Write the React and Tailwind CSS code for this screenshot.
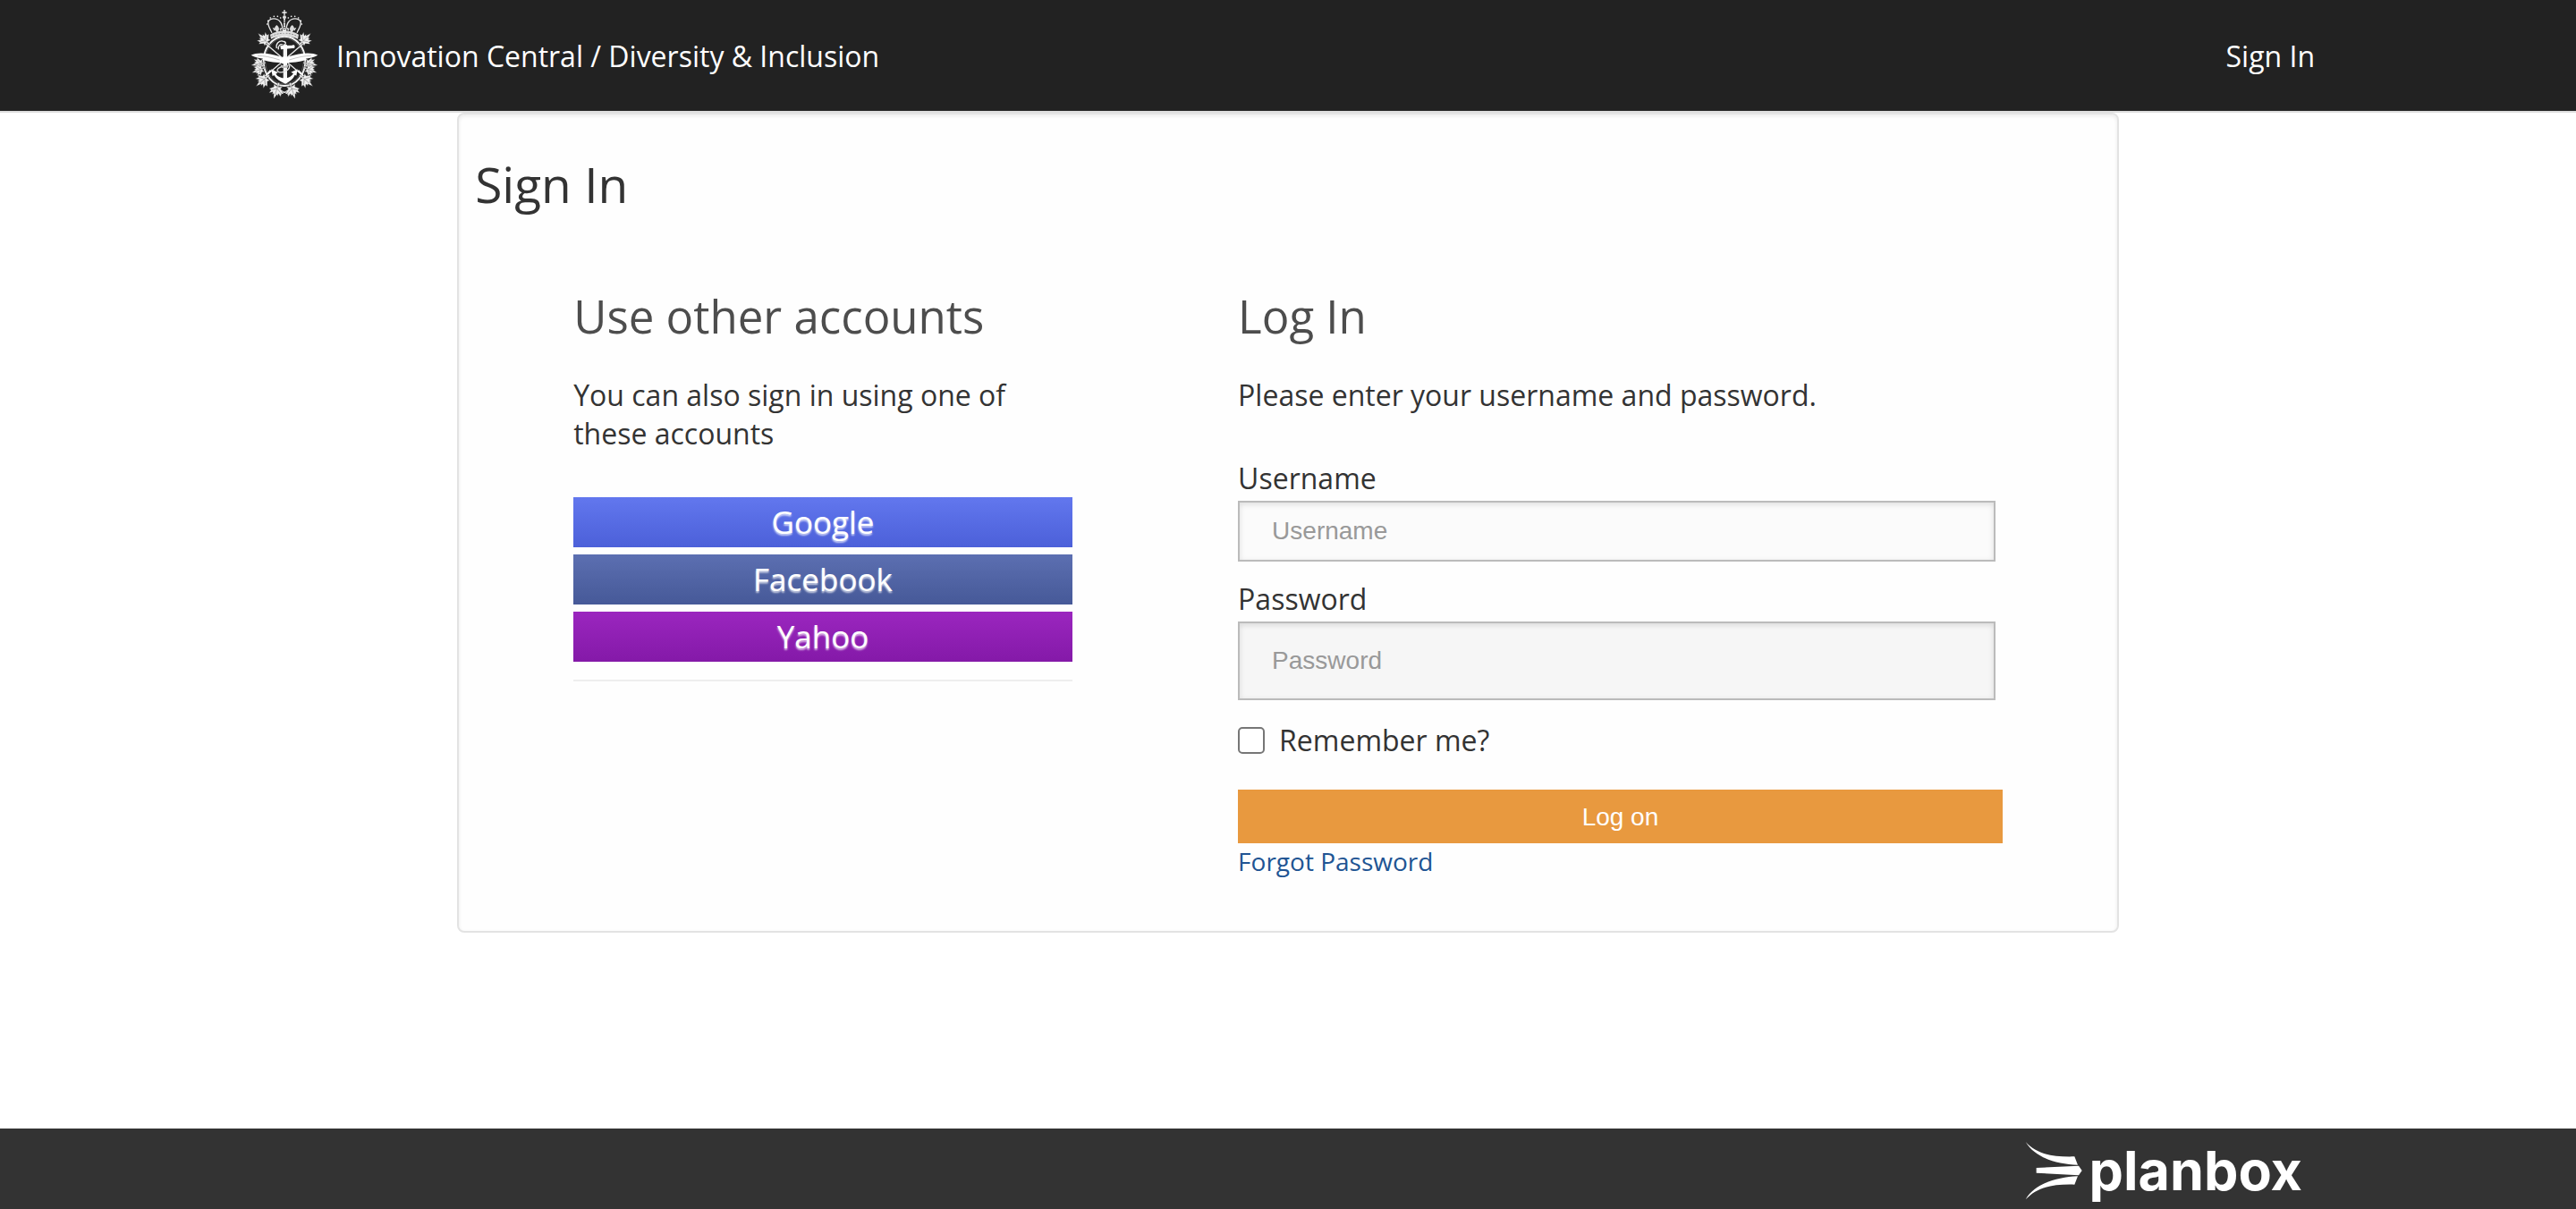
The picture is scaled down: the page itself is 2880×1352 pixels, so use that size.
const LEAF =
  "M-3 22 L-3 10 L-14 14 L-11 6 L-23 -4 L-16 -6 L-19 -17 L-9 -10 L-9 -18 L-5 -14 L0 -30 L5 -14 L9 -18 L9 -10 L19 -17 L16 -6 L23 -4 L11 6 L14 14 L3 10 L3 22 Z";

const LEAVES = [
  "translate(108 134) rotate(-45) scale(1.05)",
  "translate(90 214) rotate(-100) scale(0.95)",
  "translate(90 234) rotate(-112) scale(0.9)",
  "translate(104 268) rotate(-130) scale(1.1)",
  "translate(148 301) rotate(-162) scale(1.1)",
];

function CrestHalf() {
  return (
    <g>
      {LEAVES.map((t) => (
        <g key={t} transform={t}>
          <path d={LEAF} fill="#f0f0f0" stroke="#222" strokeWidth="1" />
          <path d="M0 14V-16M0 4L-14 -5M0 4L14 -5" stroke="#777" strokeWidth="1.5" fill="none" />
        </g>
      ))}
      <path d="M172 112C166 90 166 72 152 66C134 58 116 66 120 82C122 94 128 100 132 110" fill="none" stroke="#e6e6e6" strokeWidth="4" />
      <path d="M150 110C140 100 138 92 148 84C158 92 158 100 150 110Z M134 92l10 4-4 8z M166 92l-9 4 5 9z" fill="#dcdcdc" />
      <g fill="#fff">
        <circle cx="119" cy="70" r="2.5" />
        <circle cx="127" cy="60" r="2.5" />
        <circle cx="139" cy="55" r="2.5" />
        <circle cx="151" cy="55" r="2.5" />
        <circle cx="161" cy="60" r="2.5" />
        <circle cx="116" cy="81" r="2.5" />
      </g>
      <path d="M62 185C84 174 122 178 160 190L170 198L164 210C140 210 112 206 96 198L108 197C90 196 74 192 62 185Z" fill="#fff" />
      <path d="M84 187C106 187 130 192 158 201" stroke="#888" strokeWidth="1.5" fill="none" />
    </g>
  );
}

function Crest() {
  return (
    <svg viewBox="60 30 228 300" className="mb-1 h-[100px] w-[76px] shrink-0" aria-hidden="true">
      <ellipse cx="174" cy="205" rx="70" ry="83" fill="#222" stroke="#f2f2f2" strokeWidth="6" />
      <ellipse cx="174" cy="205" rx="64" ry="77" fill="none" stroke="#8a8a8a" strokeWidth="1.5" />
      <path d="M104 140L238 256M244 140L110 256" stroke="#e8e8e8" strokeWidth="4" />
      <path d="M128 236l-18 20M220 236l18 20" stroke="#fff" strokeWidth="6" />
      <path d="M126 116C152 98 196 98 222 116L219 131C194 117 154 117 129 131Z" fill="#dedede" />
      <path d="M130 122C156 108 192 108 218 122" stroke="#666" strokeWidth="2" strokeDasharray="6 4" fill="none" />
      <path d="M174 64V108" stroke="#eee" strokeWidth="6" strokeDasharray="5 2" />
      <circle cx="174" cy="58" r="6" fill="#ddd" />
      <path d="M174 33V52M166 42H182" stroke="#eee" strokeWidth="4" />
      <CrestHalf />
      <g transform="translate(348 0) scale(-1 1)">
        <CrestHalf />
      </g>
      <path d="M170 150H183V270H170Z" fill="#f4f4f4" />
      <path d="M160 153L206 152L208 161L162 166Z" fill="#fff" />
      <circle cx="204" cy="156" r="5" fill="#fff" />
      <path d="M148 162C144 146 156 136 168 138C182 140 180 152 170 150M154 166C152 154 160 146 168 150" fill="none" stroke="#eee" strokeWidth="4" />
      <path d="M130 232L152 243L145 248C152 258 164 262 176 262C188 262 198 256 204 247L196 242L218 232L214 254L209 251C201 268 190 274 177 281C160 274 148 266 139 252L134 256Z" fill="#fff" />
      <path d="M172 222C150 226 144 238 156 242C172 246 196 232 190 218" fill="none" stroke="#e4e4e4" strokeWidth="4" />
      <path d="M160 216L174 222L190 215L184 228H166Z" fill="#bdbdbd" />
      <ellipse cx="174" cy="202" rx="14" ry="12" fill="#fff" />
      <path d="M160 302L190 318M188 302L158 318" stroke="#e5e5e5" strokeWidth="3" />
    </svg>
  );
}

function PlanboxMark() {
  return (
    <svg viewBox="76 86 192 198" className="mt-1 h-[66px] w-16 shrink-0" fill="#fff" aria-hidden="true">
      <path d="M78 89C115 129 165 140 242 138L253 166C180 163 110 142 78 89Z" />
      <path d="M114 176L256 169L267 185L256 201L114 193Z" />
      <path d="M78 282C115 242 165 230 242 232L253 204C180 208 110 228 78 282Z" />
    </svg>
  );
}

const PROVIDERS = [
  { name: "Google", tone: "from-[#6277ee] to-[#4c60d9]" },
  { name: "Facebook", tone: "from-[#5c6fb1] to-[#465998]" },
  { name: "Yahoo", tone: "from-[#9b26bf] to-[#8419a8]" },
];

const fieldBase =
  "w-full border-2 border-[#bbb] px-9 font-['Liberation_Sans',Arial,sans-serif] text-[28px] text-[#333] placeholder:text-[#999] shadow-[inset_0_2px_6px_rgba(0,0,0,0.12)] outline-none";

export default function App() {
  return (
    <div className="flex min-h-screen flex-col bg-white font-['Open_Sans',sans-serif] text-[32px] leading-[43px] text-[#333]">
      <header className="border-b-2 border-[#ddd] bg-[#222] text-white">
        <div className="mx-auto flex h-[124px] max-w-[2340px] items-center pr-[22px] pl-[10px]">
          <a href="#home" className="flex items-center gap-5">
            <Crest />
            <span>Innovation Central / Diversity &amp; Inclusion</span>
          </a>
          <a href="#signin" className="ml-auto">Sign In</a>
        </div>
      </header>

      <main className="flex-1">
        <section className="mx-auto w-[64.5%] rounded-lg border-2 border-[#e3e3e3] bg-[#fefefe] pt-[46px] pb-[58px] shadow-[inset_0_2px_4px_rgba(0,0,0,0.08)]">
          <h1 className="px-[18px] text-[55px] leading-[64px]">Sign In</h1>

          <div className="mt-[85px] flex px-32">
            <div className="w-[34.9%]">
              <h2 className="text-[51px] leading-[60px] text-[#4d4d4d]">Use other accounts</h2>
              <p className="mt-[37px] pr-10">You can also sign in using one of these accounts</p>
              <div className="mt-[50px] flex flex-col gap-2">
                {PROVIDERS.map((p) => (
                  <button
                    key={p.name}
                    type="button"
                    className={`h-14 w-full bg-linear-to-b text-[35px] leading-[56px] font-medium text-white [text-shadow:0_2px_2px_rgba(255,255,255,0.7)] ${p.tone}`}
                  >
                    {p.name}
                  </button>
                ))}
              </div>
              <hr className="mt-5 border-t-2 border-[#eee]" />
            </div>

            <form className="ml-auto w-[53.5%]" onSubmit={(e) => e.preventDefault()}>
              <h2 className="text-[51px] leading-[60px] text-[#4d4d4d]">Log In</h2>
              <p className="mt-[37px]">Please enter your username and password.</p>
              <div className="mt-[50px] pr-2">
                <label htmlFor="username" className="block">Username</label>
                <input id="username" type="text" placeholder="Username" className={`mt-1 block h-[68px] bg-[#fbfbfb] ${fieldBase}`} />
                <label htmlFor="password" className="mt-5 block">Password</label>
                <input id="password" type="password" placeholder="Password" className={`mt-1 block h-[88px] bg-[#f6f6f6] ${fieldBase}`} />
              </div>
              <div className="mt-[23px] flex items-center gap-4">
                <input
                  id="remember"
                  type="checkbox"
                  className="size-[30px] shrink-0 appearance-none rounded-[5px] border-2 border-[#767676] bg-white checked:bg-[#1a73e8]"
                />
                <label htmlFor="remember">Remember me?</label>
              </div>
              <button
                type="submit"
                className="mt-[34px] block h-[60px] w-full bg-[#e8993f] font-['Liberation_Sans',Arial,sans-serif] text-[28px] text-white"
              >
                Log on
              </button>
              <a href="#forgot" className="block w-fit text-[28px] leading-10 text-[#205493]">Forgot Password</a>
            </form>
          </div>
        </section>
      </main>

      <footer className="bg-[#333] text-white">
        <div className="mx-auto flex h-[90px] max-w-[2340px] items-center justify-end pr-9">
          <a href="#planbox" className="flex items-center gap-2">
            <PlanboxMark />
            <span className="pt-1 font-['Inter',sans-serif] text-[61px] leading-[66px] font-bold">planbox</span>
          </a>
        </div>
      </footer>
    </div>
  );
}
